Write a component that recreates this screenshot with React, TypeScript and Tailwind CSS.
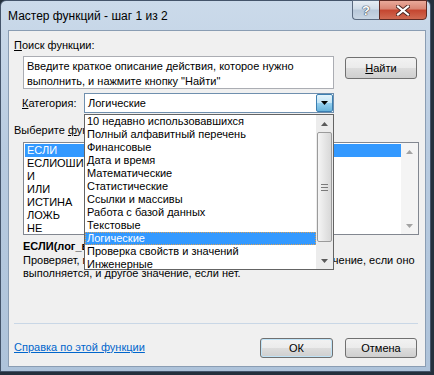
import React from 'react'

const categories = [
  '10 недавно использовавшихся',
  'Полный алфавитный перечень',
  'Финансовые',
  'Дата и время',
  'Математические',
  'Статистические',
  'Ссылки и массивы',
  'Работа с базой данных',
  'Текстовые',
  'Логические',
  'Проверка свойств и значений',
  'Инженерные'
]

const functions = ['ЕСЛИ', 'ЕСЛИОШИБКА', 'И', 'ИЛИ', 'ИСТИНА', 'ЛОЖЬ', 'НЕ']

const Arrow: React.FC<{ down?: boolean; color: string }> = ({ down, color }) => (
  <svg width="7" height="4" viewBox="0 0 7 4">
    <path d={down ? 'M0 0 L7 0 L3.5 4 Z' : 'M0 4 L3.5 0 L7 4 Z'} fill={color} />
  </svg>
)

const winButton = 'h-[20px] rounded-[3px] border border-[#707070] bg-[linear-gradient(#f2f2f2,#ebebeb_50%,#dddddd_50%,#cfcfcf)] flex items-center justify-center'

const App: React.FC = () => {
  return (
    <div className="relative w-[434px] h-[375px] overflow-hidden bg-[#24303d] font-['Liberation_Sans',Arial,sans-serif] text-[11px] text-black">
      {/* Window frame */}
      <div className="flex flex-col w-[431px] h-[372px] rounded-t-[6px] border border-[#44546a] bg-[linear-gradient(#cbdaea,#b8cbe0_40%,#aec3da)]">
        {/* Title bar */}
        <div className="flex items-start h-[29px]">
          <div className="ml-[7px] mt-[7px] h-[16px] leading-[16px] text-[12px] text-black">Мастер функций - шаг 1 из 2</div>
          <div className="ml-auto mr-[3px] -mt-px flex">
            <div className="w-[27px] h-[20px] rounded-bl-[4px] border border-[#5b6b80] border-r-0 bg-[linear-gradient(#e6edf4,#d0dce8_45%,#b8c8d9_50%,#c9d6e4)] flex items-center justify-center">
              <span className="text-[13px] font-bold leading-none text-white [text-shadow:0_0_1px_#3a4656,0_0_1px_#3a4656,0_0_1px_#3a4656]">?</span>
            </div>
            <div className="w-[48px] h-[20px] rounded-br-[4px] border border-[#5e2a24] bg-[linear-gradient(#e9a99a,#d98573_45%,#c4452f_50%,#d06a52)] flex items-center justify-center">
              <svg width="14" height="11" viewBox="0 0 14 11">
                <path d="M2 1.5 L12 9.5 M12 1.5 L2 9.5" stroke="#4a2520" strokeWidth="4" strokeLinecap="square" />
                <path d="M2 1.5 L12 9.5 M12 1.5 L2 9.5" stroke="#ffffff" strokeWidth="2.2" strokeLinecap="square" />
              </svg>
            </div>
          </div>
        </div>

        {/* Client area */}
        <div className="relative ml-[7px] w-[418px] h-[337px] border border-[#8a9db3] bg-[#f0f0f0] flex flex-col pl-[5px]">
          <div className="mt-[7px] h-[14px] leading-[14px]"><span className="underline">П</span>оиск функции:</div>

          <div className="mt-[4px] flex items-start">
            <div className="ml-[9px] w-[311px] h-[33px] border border-[#abadb3] bg-white pl-[3px] pt-[2px] leading-[15px]">
              <div>Введите краткое описание действия, которое нужно</div>
              <div>выполнить, и нажмите кнопку "Найти"</div>
            </div>
            <div className={`${winButton} ml-[11px] mt-[1px] w-[72px] h-[22px]`}>
              <span><span className="underline">Н</span>айти</span>
            </div>
          </div>

          <div className="mt-[4px] flex items-center h-[20px]">
            <div className="ml-[8px] w-[62px]"><span className="underline">К</span>атегория:</div>
            <div className="w-[250px] h-[20px] border border-[#6f8fae] bg-white flex items-center">
              <div className="pl-[3px] flex-1">Логические</div>
              <div className="w-[17px] h-[18px] rounded-[2px] border border-[#3c7fb1] bg-[linear-gradient(#e3f4fc,#c4e5f6_50%,#98d1ef_50%,#68b3db)] flex items-center justify-center">
                <Arrow down color="#000000" />
              </div>
            </div>
          </div>

          <div className="mt-[10px] h-[14px] leading-[14px]">Выберите <span className="underline">ф</span>ункцию:</div>

          <div className="mt-[5px] ml-[9px] w-[396px] h-[93px] border border-[#828790] bg-white flex">
            <div className="flex-1 pt-px pl-px">
              {functions.map((name, index) => (
                <div
                  key={name}
                  className={index === 0 ? 'h-[13px] leading-[13px] pl-[2px] bg-[#3399ff] text-white' : 'h-[13px] leading-[13px] pl-[2px]'}
                >
                  {name}
                </div>
              ))}
            </div>
            <div className="w-[17px] bg-[#f4f4f4] flex flex-col justify-between">
              <div className="h-[17px] flex items-center justify-center"><Arrow color="#a3a3a3" /></div>
              <div className="h-[17px] flex items-center justify-center"><Arrow down color="#a3a3a3" /></div>
            </div>
          </div>

          <div className="mt-[4px] ml-[9px] w-[300px] h-[14px] leading-[14px] font-bold whitespace-nowrap overflow-hidden">
            ЕСЛИ(лог_выражение;значение_если_истина;значение_если_ложь)
          </div>
          <div className="mt-px ml-[9px] leading-[13px]">
            <div>Проверяет, выполняется ли условие, и возвращает одно значение, если оно</div>
            <div>выполняется, и другое значение, если нет.</div>
          </div>

          <div className="mt-[43px] w-[404px] h-px bg-[#c9d7e6]" />

          <div className="mt-[14px] flex items-center h-[20px] pr-[8px]">
            <a className="-mt-[2px] text-[#0066cc] underline">Справка по этой функции</a>
            <div className={`${winButton} ml-auto w-[73px] border-[#3c7fb1] shadow-[inset_0_0_0_1px_#bfe3f7]`}>ОК</div>
            <div className={`${winButton} ml-[12px] w-[72px]`}>Отмена</div>
          </div>

          {/* Opened category dropdown */}
          <div className="absolute left-[75px] top-[83px] w-[250px] h-[156px] border border-[#646464] bg-white flex">
            <div className="flex-1">
              {categories.map((name, index) => (
                <div
                  key={name}
                  className={index === 9
                    ? 'h-[13px] leading-[13px] pl-[2px] whitespace-nowrap bg-[#3399ff] text-white outline-1 outline-dotted outline-[#d9a15a] -outline-offset-1'
                    : 'h-[13px] leading-[13px] pl-[2px] whitespace-nowrap'}
                >
                  {name}
                </div>
              ))}
            </div>
            <div className="w-[17px] bg-[#ececec] flex flex-col">
              <div className="h-[17px] flex items-center justify-center"><Arrow color="#5a5a5a" /></div>
              <div className="mx-px h-[110px] rounded-[2px] border border-[#9b9b9b] bg-[linear-gradient(90deg,#f5f5f5,#e6e6e6_50%,#d8d8d8)] flex flex-col items-center justify-center gap-[2px]">
                <div className="w-[7px] h-px bg-[#7a7a7a]" />
                <div className="w-[7px] h-px bg-[#7a7a7a]" />
                <div className="w-[7px] h-px bg-[#7a7a7a]" />
              </div>
              <div className="flex-1" />
              <div className="h-[17px] flex items-center justify-center"><Arrow down color="#5a5a5a" /></div>
            </div>
          </div>
        </div>
      </div>
    </div>
  )
}

export default App
